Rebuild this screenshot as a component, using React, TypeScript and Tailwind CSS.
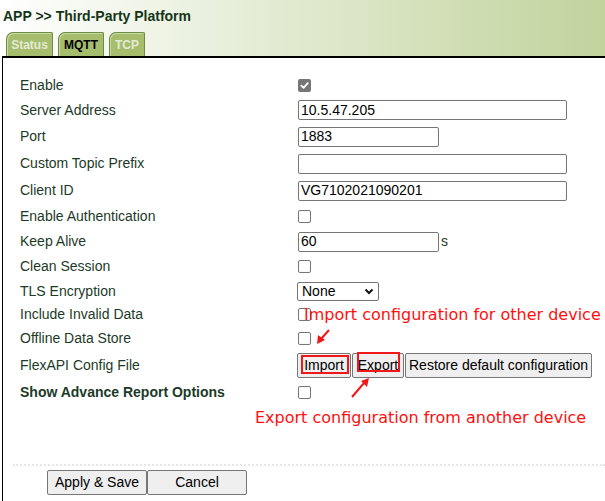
import React from "react";

// ---------------------------------------------------------------------------
// Small form pieces
// ---------------------------------------------------------------------------
function Check({ checked = false }: { checked?: boolean }) {
  if (checked) {
    return (
      <span className="flex h-[13px] w-[13px] items-center justify-center rounded-[2px] bg-[#767676]">
        <svg width="9" height="9" viewBox="0 0 10 10" fill="none">
          <path d="M1.5 5.2L4 7.6L8.6 2.4" stroke="#fff" strokeWidth="2" strokeLinecap="round" strokeLinejoin="round" />
        </svg>
      </span>
    );
  }
  return <span className="block h-[13px] w-[13px] rounded-[2px] border border-[#767676] bg-white" />;
}

function TextBox({ value = "", w }: { value?: string; w: string }) {
  return (
    <div className={`${w} flex h-[20px] items-center rounded-[2px] border border-[#767676] bg-white px-[2px] text-[14px] text-black`}>
      {value}
    </div>
  );
}

function Btn({ children, w }: { children: React.ReactNode; w: string }) {
  return (
    <button
      type="button"
      className={`${w} relative flex h-[25px] items-center justify-center rounded-[2px] border border-[#767676] bg-[#efefef] text-[14px] text-black`}
    >
      {children}
    </button>
  );
}

interface RowProps {
  label: string;
  h: string;
  bold?: boolean;
  children?: React.ReactNode;
}

function Row({ label, h, bold, children }: RowProps) {
  return (
    <div className={`flex items-center ${h}`}>
      <div className={`w-[278px] text-[14px] text-[#1c3a28] ${bold ? "font-bold" : ""}`}>{label}</div>
      <div className="flex items-center">{children}</div>
    </div>
  );
}

function Tab({ label, active, w }: { label: string; active?: boolean; w: string }) {
  return (
    <div
      className={`${w} flex h-[24px] items-center justify-center rounded-tl-[7px] rounded-tr-[2px] border border-b-0 border-[#6f8c45] bg-[#a5bd6c] text-[12px] font-bold shadow-[inset_1px_1px_0_#c9d9a4] ${
        active ? "text-black" : "text-[#e3ebd3]"
      }`}
    >
      {label}
    </div>
  );
}

// ---------------------------------------------------------------------------
// Page
// ---------------------------------------------------------------------------
export default function App() {
  return (
    <div className="relative h-[501px] w-[605px] overflow-hidden bg-white font-['Liberation_Sans',Arial,sans-serif]">
      {/* Header */}
      <div className="h-[56px] bg-gradient-to-r from-[#ffffff] to-[#c2d39d] pl-[3px] pt-[7px]">
        <h1 className="text-[14px] font-bold leading-[18px] text-[#15351a]">APP &gt;&gt; Third-Party Platform</h1>
        <div className="mt-[7px] flex items-end gap-[5px] pl-[3px]">
          <Tab label="Status" w="w-[47px]" />
          <Tab label="MQTT" active w="w-[46px]" />
          <Tab label="TCP" w="w-[36px]" />
        </div>
      </div>

      {/* Content panel */}
      <div className="ml-[2px] h-[445px] border-l border-t-2 border-black">
        <div className="pl-[17px] pt-[15px]">
          <Row label="Enable" h="h-[24px]">
            <Check checked />
          </Row>
          <Row label="Server Address" h="h-[26px]">
            <TextBox value="10.5.47.205" w="w-[269px]" />
          </Row>
          <Row label="Port" h="h-[27px]">
            <TextBox value="1883" w="w-[141px]" />
          </Row>
          <Row label="Custom Topic Prefix" h="h-[27px]">
            <TextBox w="w-[269px]" />
          </Row>
          <Row label="Client ID" h="h-[27px]">
            <TextBox value="VG7102021090201" w="w-[269px]" />
          </Row>
          <Row label="Enable Authentication" h="h-[25px]">
            <Check />
          </Row>
          <Row label="Keep Alive" h="h-[25px]">
            <TextBox value="60" w="w-[141px]" />
            <span className="ml-[2px] text-[14px] text-[#1c3a28]">s</span>
          </Row>
          <Row label="Clean Session" h="h-[25px]">
            <Check />
          </Row>
          <Row label="TLS Encryption" h="h-[24px]">
            <div className="-ml-[1px] flex h-[19px] w-[82px] items-center justify-between rounded-[2px] border border-[#767676] bg-white pl-[4px] pr-[4px] text-[14px] text-black">
              <span>None</span>
              <svg width="10" height="7" viewBox="0 0 10 7" fill="none">
                <path d="M1.5 1.5L5 5L8.5 1.5" stroke="#111" strokeWidth="2" />
              </svg>
            </div>
          </Row>
          <Row label="Include Invalid Data" h="h-[23px]">
            <Check />
          </Row>
          <Row label="Offline Data Store" h="h-[25px]">
            <Check />
          </Row>
          <Row label="FlexAPI Config File" h="h-[28px]">
            <div className="-ml-[1px] flex gap-[1px]">
              <Btn w="w-[54px]">
                Import
                <span className="absolute left-[3px] top-[1px] h-[19px] w-[48px] border-2 border-[#f01818]" />
              </Btn>
              <Btn w="w-[52px]">
                Export
                <span className="absolute left-[4px] top-[-2px] h-[20px] w-[43px] border-2 border-[#f01818]" />
              </Btn>
              <Btn w="w-[187px]">Restore default configuration</Btn>
            </div>
          </Row>
          <Row label="Show Advance Report Options" h="h-[26px]" bold>
            <Check />
          </Row>
        </div>

        {/* Footer */}
        <div className="ml-[10px] mt-[59px] border-t-2 border-dotted border-[#e6e6e6]" />
        <div className="ml-[44px] mt-[4px] flex">
          <Btn w="w-[100px]">Apply &amp; Save</Btn>
          <Btn w="w-[100px]">Cancel</Btn>
        </div>
      </div>

      {/* Annotations */}
      <div className="absolute left-[304px] top-[305px] font-['DejaVu_Sans',sans-serif] text-[16px] leading-[20px] text-[#ff1010]">
        Import configuration for other device
      </div>
      <div className="absolute left-[255px] top-[408px] font-['DejaVu_Sans',sans-serif] text-[16px] leading-[20px] text-[#ff1010]">
        Export configuration from another device
      </div>
      <svg className="pointer-events-none absolute left-0 top-0" width="605" height="501">
        <g stroke="#f01818" strokeWidth="2" fill="#f01818">
          <line x1="329" y1="330" x2="321" y2="339" />
          <polygon points="317,344 318,335 325,340" stroke="none" />
          <line x1="352" y1="397" x2="364" y2="383" />
          <polygon points="369,378 361,381 367,387" stroke="none" />
        </g>
      </svg>
    </div>
  );
}
